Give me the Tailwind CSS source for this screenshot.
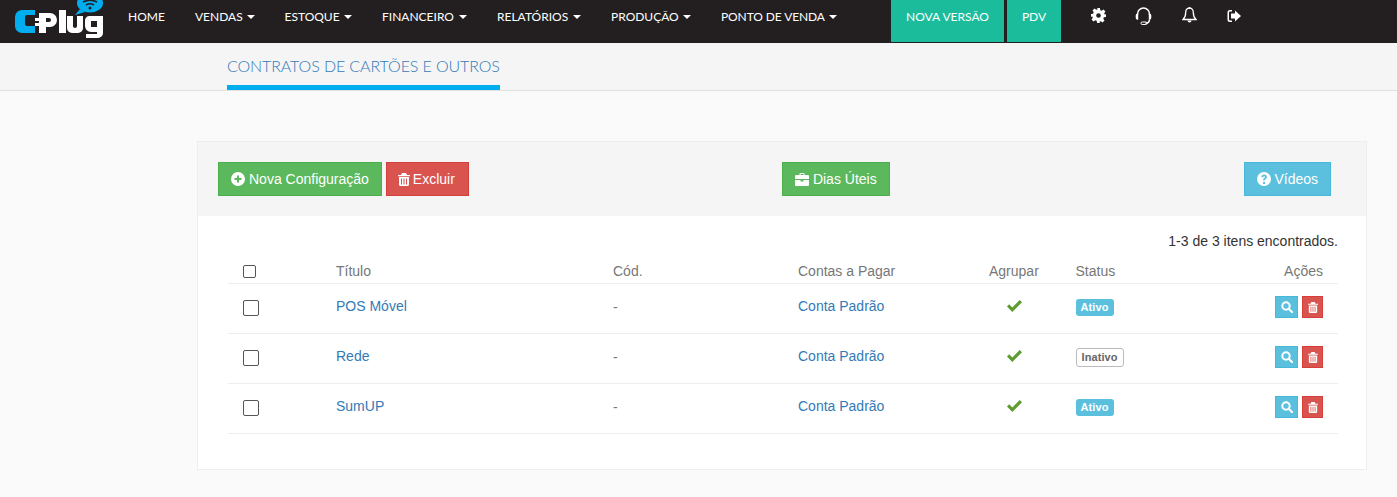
<!DOCTYPE html>
<html lang="pt-BR">
<head>
  <meta charset="UTF-8">
  <title>Contratos de Cartões e Outros</title>
  <script src="https://cdn.jsdelivr.net/npm/@tailwindcss/browser@4"></script>
</head>
<body class="bg-[#fafafa] font-['Liberation_Sans',Arial,sans-serif] text-[14px] text-[#333] overflow-hidden h-[497px]">
  <header class="h-[43px] bg-[#231f20] flex font-['Lato',sans-serif] text-[12px] text-white">
    <a href="#" class="w-[128px] pl-[14px] shrink-0">
      <svg width="92" height="41" viewBox="0 0 92 41" class="block">
        <path d="M21 10H8a7 7 0 0 0-7 7v9a7 7 0 0 0 7 7h13v-7h-8a2 2 0 0 1-2-2v-7a2 2 0 0 1 2-2h8z" fill="#00aeef"/>
        <rect x="21" y="18" width="5" height="3" fill="#fff"/>
        <rect x="21" y="23" width="5" height="3" fill="#fff"/>
        <path fill="#fff" fill-rule="evenodd" d="M25 13h11a7 7 0 0 1 0 14h-4v6h-7zM32 18v4h3a2 2 0 0 0 0-4z"/>
        <path d="M45 10h7v23h-7z" fill="#fff"/>
        <path d="M53 16h6v10a2 2 0 0 0 4 0V16h6v12a5 5 0 0 1-5 5h-6a5 5 0 0 1-5-5z" fill="#fff"/>
        <path fill="#fff" fill-rule="evenodd" d="M75 16h14v17a5 5 0 0 1-5 5H72v-4h11v-2h-6a6 6 0 0 1-6-6v-5a5 5 0 0 1 4-5zM77 21v6h6v-6z"/>
        <ellipse cx="76" cy="3" rx="13" ry="9.500" fill="#00aeef"/>
        <path d="M66 9l-5 6 10-3z" fill="#00aeef"/>
        <path d="M69 2q7-3.500 14 0M72 5q4-2.500 8 0" stroke="#231f20" stroke-width="1.500" fill="none"/>
        <circle cx="76" cy="8" r="1.500" fill="#231f20"/>
      </svg>
    </a>
    <nav class="flex items-start pt-[10px] leading-[14px] whitespace-nowrap">
      <a href="#" class="w-[67px]">HOME</a>
      <a href="#" class="w-[89.500px] flex items-center gap-[4px]">VENDAS <span class="border-x-[4px] border-x-transparent border-t-[4px] border-t-white"></span></a>
      <a href="#" class="w-[97.500px] flex items-center gap-[4px]">ESTOQUE <span class="border-x-[4px] border-x-transparent border-t-[4px] border-t-white"></span></a>
      <a href="#" class="w-[115px] flex items-center gap-[5px]">FINANCEIRO <span class="border-x-[4px] border-x-transparent border-t-[4px] border-t-white"></span></a>
      <a href="#" class="w-[114px] flex items-center gap-[5px]">RELATÓRIOS <span class="border-x-[4px] border-x-transparent border-t-[4px] border-t-white"></span></a>
      <a href="#" class="w-[110px] flex items-center gap-[4px]">PRODUÇÃO <span class="border-x-[4px] border-x-transparent border-t-[4px] border-t-white"></span></a>
      <a href="#" class="w-[170px] flex items-center gap-[4px] tracking-[-0.1px]">PONTO DE VENDA <span class="border-x-[4px] border-x-transparent border-t-[4px] border-t-white"></span></a>
    </nav>
    <a href="#" class="h-[42px] w-[113px] bg-[#1abc9c] flex justify-center pt-[10px] leading-[14px] mr-[3px]">NOVA VERSÃO</a>
    <a href="#" class="h-[42px] w-[54px] bg-[#1abc9c] flex justify-center pt-[10px] leading-[14px]">PDV</a>
    <div class="flex items-start ml-[30px] pt-[7px] text-white">
      <svg width="15" height="15" viewBox="0 0 16 16" fill="currentColor" class="mt-[1px]"><path fill-rule="evenodd" d="M6.500 0h3l.4 2.300 1.500.6L13.300 1.600l2.100 2.100-1.300 1.900.6 1.500L16 6.500v3l-2.300.4-.6 1.500 1.300 1.900-2.100 2.100-1.900-1.300-1.500.6L9.500 16h-3l-.4-2.300-1.500-.6-1.900 1.300-2.100-2.100 1.300-1.900-.6-1.500L0 9.500v-3l2.300-.4.600-1.500L1.600 2.700l2.100-2.100 1.900 1.300 1.500-.6zM8 5.500a2.500 2.500 0 1 0 0 5 2.500 2.500 0 0 0 0-5z"/></svg>
      <svg width="17" height="18" viewBox="0 0 17 18" fill="none" stroke="currentColor" stroke-width="1.500" class="ml-[29px]"><path d="M2.500 8V7a6 6 0 0 1 12 0v1"/><path d="M2.300 6.500a2 2 0 0 0-1.600 2v2a2 2 0 0 0 1.600 2.200l.9 0v-6.200z" fill="currentColor" stroke="none"/><path d="M14.700 6.500a2 2 0 0 1 1.600 2v2a2 2 0 0 1-1.600 2.200l-.9 0v-6.200z" fill="currentColor" stroke="none"/><path d="M14.500 12.500q0 3.500-4 3.800"/><rect x="6" y="15" width="6" height="2.500" rx="1.200" stroke-width="1"/></svg>
      <svg width="15" height="16" viewBox="0 0 15 16" fill="none" stroke="currentColor" stroke-width="1.300" class="ml-[30px]"><path d="M7.500 1.200c-2.500 0-3.800 1.800-3.800 4.300 0 3.500-1 5.500-2.700 7h13c-1.700-1.500-2.700-3.500-2.700-7 0-2.500-1.300-4.300-3.800-4.300z"/><path d="M5.500 13.500h4a2 2 0 0 1-4 0z" fill="currentColor" stroke="none"/><rect x="6.700" y="0" width="1.600" height="2" fill="currentColor" stroke="none"/></svg>
      <svg width="15" height="14" viewBox="0 0 15 14" fill="currentColor" class="ml-[30px] mt-[1.500px]"><path d="M5 1H3a2.500 2.500 0 0 0-2.500 2.500v7A2.500 2.500 0 0 0 3 13h2v-1.500H3A1 1 0 0 1 2 10.500v-7a1 1 0 0 1 1-1h2z"/><path d="M4 4.500h4V1.500L14 7l-6 5.500v-3H4z"/></svg>
    </div>
  </header>

  <div class="h-[47px] bg-[#f5f5f5] border-b border-[#e0e0e0] pl-[227px] box-content">
    <a href="#" class="inline-block h-[47px] pt-[13px] border-b-[5px] border-[#00aeef] font-['Lato',sans-serif] font-light text-[16px] leading-[20px] tracking-[-0.1px] text-[#337ab7]">CONTRATOS DE CARTÕES E OUTROS</a>
  </div>

  <main class="ml-[197px] mr-[30px] mt-[50px] bg-white border border-[#eeeeee] h-[329px]">
    <div class="h-[74px] bg-[#f5f5f5] flex items-center pl-[20px] pr-[35px]">
      <div class="flex gap-[4px]">
        <button class="h-[34px] px-[12px] bg-[#5cb85c] border border-[#4cae4c] text-white flex items-center gap-[4px]">
          <svg width="14" height="14" viewBox="0 0 14 14"><path fill="#fff" fill-rule="evenodd" d="M7 0a7 7 0 1 0 0 14A7 7 0 0 0 7 0zM6 3.500h2V6h2.500v2H8v2.500H6V8H3.500V6H6z"/></svg>
          Nova Configuração
        </button>
        <button class="h-[34px] pl-[11px] pr-[13px] bg-[#d9534f] border border-[#d43f3a] text-white flex items-center gap-[3px]">
          <svg width="12" height="13" viewBox="0 0 12 13"><path fill="#fff" d="M4 0h4l1 2h3v1.200H0V2h3zM1 4h10v7.500A1.500 1.500 0 0 1 9.500 13h-7A1.500 1.500 0 0 1 1 11.500zm2 1.500v6h1v-6zm2.500 0v6h1v-6zm2.500 0v6h1v-6z"/></svg>
          Excluir
        </button>
      </div>
      <button class="ml-[313px] h-[34px] px-[12px] bg-[#5cb85c] border border-[#4cae4c] text-white flex items-center gap-[4px]">
        <svg width="14" height="13" viewBox="0 0 14 13"><path fill="#fff" fill-rule="evenodd" d="M4.500 2V1a1 1 0 0 1 1-1h3a1 1 0 0 1 1 1v1H13a1 1 0 0 1 1 1v3H0V3a1 1 0 0 1 1-1zm1 0h3V1h-3zM0 7h5.500v1.500h3V7H14v5a1 1 0 0 1-1 1H1a1 1 0 0 1-1-1z"/></svg>
        Dias Úteis
      </button>
      <button class="ml-auto h-[34px] px-[12px] bg-[#5bc0de] border border-[#46b8da] text-white flex items-center gap-[3px]">
        <svg width="14" height="14" viewBox="0 0 14 14"><path fill="#fff" fill-rule="evenodd" d="M7 0a7 7 0 1 0 0 14A7 7 0 0 0 7 0zM6 10h2v2H6zM4.300 5.200C4.500 3.500 5.600 2.500 7.200 2.500c1.600 0 2.700 1 2.700 2.400 0 1.100-.6 1.700-1.300 2.200-.5.400-.7.600-.7 1.400H6.100c0-1.400.4-2 1.200-2.500.5-.4.700-.6.700-1.100 0-.4-.3-.7-.8-.7-.6 0-.9.400-1 1.100z"/></svg>
        Vídeos
      </button>
    </div>

    <div class="pl-[30px] pr-[28px]">
      <p class="text-right text-[#333] leading-[20px] mt-[15px]">1-3 de 3 itens encontrados.</p>
      <table class="w-full border-collapse mt-[10px] table-fixed text-[#777]">
        <thead>
          <tr class="h-[22px] border-b border-[#eeeeee]">
            <th class="w-[108px] font-normal text-left pl-[15px] pb-[1px]"><span class="block w-[13px] h-[13px] border border-[#555] rounded-[2px] bg-white"></span></th>
            <th class="w-[277px] font-normal text-left pb-[1px]">Título</th>
            <th class="w-[185px] font-normal text-left pb-[1px]">Cód.</th>
            <th class="w-[191px] font-normal text-left pb-[1px]">Contas a Pagar</th>
            <th class="w-[86.500px] font-normal text-left pb-[1px]">Agrupar</th>
            <th class="font-normal text-left pb-[1px]">Status</th>
            <th class="w-[120px] font-normal text-right pr-[15px] pb-[1px]">Ações</th>
          </tr>
        </thead>
        <tbody>
          <tr class="h-[50px] border-b border-[#eeeeee]">
            <td class="pl-[15px] pb-[2px]"><span class="block w-[16px] h-[16px] border border-[#555] rounded-[2px] bg-white"></span></td>
            <td class="text-[#337ab7] pb-[5px]">POS Móvel</td>
            <td class="pb-[3px]">-</td>
            <td class="text-[#337ab7] pb-[5px]">Conta Padrão</td>
            <td class="pb-[5px] pl-[18px]"><svg width="15" height="12" viewBox="0 0 15 12"><path fill="#5d9c2f" d="M0 6.500 2.200 4.300 5.300 7.400 12.700 0 15 2.200 5.300 12z"/></svg></td>
            <td class="pb-[4px]"><span class="inline-block h-[17px] px-[5px] rounded-[3px] bg-[#5bc0de] text-white text-[11px] font-bold leading-[17px] align-middle tracking-[0.1px]">Ativo</span></td>
            <td class="pr-[15px] pb-[3px]">
              <div class="flex justify-end gap-[4px]">
                <button class="w-[23px] h-[22px] bg-[#5bc0de] border border-[#46b8da] flex items-center justify-center"><svg width="12" height="12" viewBox="0 0 12 12" fill="none" stroke="#fff" stroke-width="2"><circle cx="5" cy="5" r="3.700"/><path d="M8 8l3.200 3.200" stroke-linecap="round"/></svg></button>
                <button class="w-[21px] h-[22px] bg-[#d9534f] border border-[#d43f3a] flex items-center justify-center"><svg width="10" height="11" viewBox="0 0 12 13"><path fill="#fff" d="M4 0h4l1 2h3v1.200H0V2h3zM1 4h10v7.500A1.500 1.500 0 0 1 9.500 13h-7A1.500 1.500 0 0 1 1 11.500zm2 1.500v6h1v-6zm2.500 0v6h1v-6zm2.500 0v6h1v-6z"/></svg></button>
              </div>
            </td>
          </tr>
          <tr class="h-[50px] border-b border-[#eeeeee]">
            <td class="pl-[15px] pb-[2px]"><span class="block w-[16px] h-[16px] border border-[#555] rounded-[2px] bg-white"></span></td>
            <td class="text-[#337ab7] pb-[5px]">Rede</td>
            <td class="pb-[3px]">-</td>
            <td class="text-[#337ab7] pb-[5px]">Conta Padrão</td>
            <td class="pb-[5px] pl-[18px]"><svg width="15" height="12" viewBox="0 0 15 12"><path fill="#5d9c2f" d="M0 6.500 2.200 4.300 5.300 7.400 12.700 0 15 2.200 5.300 12z"/></svg></td>
            <td class="pb-[4px]"><span class="inline-block h-[19px] px-[5px] rounded-[3px] bg-white border border-[#bbb] text-[#666] text-[11px] font-bold leading-[17px] align-middle tracking-[0.1px]">Inativo</span></td>
            <td class="pr-[15px] pb-[3px]">
              <div class="flex justify-end gap-[4px]">
                <button class="w-[23px] h-[22px] bg-[#5bc0de] border border-[#46b8da] flex items-center justify-center"><svg width="12" height="12" viewBox="0 0 12 12" fill="none" stroke="#fff" stroke-width="2"><circle cx="5" cy="5" r="3.700"/><path d="M8 8l3.200 3.200" stroke-linecap="round"/></svg></button>
                <button class="w-[21px] h-[22px] bg-[#d9534f] border border-[#d43f3a] flex items-center justify-center"><svg width="10" height="11" viewBox="0 0 12 13"><path fill="#fff" d="M4 0h4l1 2h3v1.200H0V2h3zM1 4h10v7.500A1.500 1.500 0 0 1 9.500 13h-7A1.500 1.500 0 0 1 1 11.500zm2 1.500v6h1v-6zm2.500 0v6h1v-6zm2.500 0v6h1v-6z"/></svg></button>
              </div>
            </td>
          </tr>
          <tr class="h-[50px] border-b border-[#eeeeee]">
            <td class="pl-[15px] pb-[2px]"><span class="block w-[16px] h-[16px] border border-[#555] rounded-[2px] bg-white"></span></td>
            <td class="text-[#337ab7] pb-[5px]">SumUP</td>
            <td class="pb-[3px]">-</td>
            <td class="text-[#337ab7] pb-[5px]">Conta Padrão</td>
            <td class="pb-[5px] pl-[18px]"><svg width="15" height="12" viewBox="0 0 15 12"><path fill="#5d9c2f" d="M0 6.500 2.200 4.300 5.300 7.400 12.700 0 15 2.200 5.300 12z"/></svg></td>
            <td class="pb-[4px]"><span class="inline-block h-[17px] px-[5px] rounded-[3px] bg-[#5bc0de] text-white text-[11px] font-bold leading-[17px] align-middle tracking-[0.1px]">Ativo</span></td>
            <td class="pr-[15px] pb-[3px]">
              <div class="flex justify-end gap-[4px]">
                <button class="w-[23px] h-[22px] bg-[#5bc0de] border border-[#46b8da] flex items-center justify-center"><svg width="12" height="12" viewBox="0 0 12 12" fill="none" stroke="#fff" stroke-width="2"><circle cx="5" cy="5" r="3.700"/><path d="M8 8l3.200 3.200" stroke-linecap="round"/></svg></button>
                <button class="w-[21px] h-[22px] bg-[#d9534f] border border-[#d43f3a] flex items-center justify-center"><svg width="10" height="11" viewBox="0 0 12 13"><path fill="#fff" d="M4 0h4l1 2h3v1.200H0V2h3zM1 4h10v7.500A1.500 1.500 0 0 1 9.500 13h-7A1.500 1.500 0 0 1 1 11.500zm2 1.500v6h1v-6zm2.500 0v6h1v-6zm2.500 0v6h1v-6z"/></svg></button>
              </div>
            </td>
          </tr>
        </tbody>
      </table>
    </div>
  </main>
</body>
</html>
